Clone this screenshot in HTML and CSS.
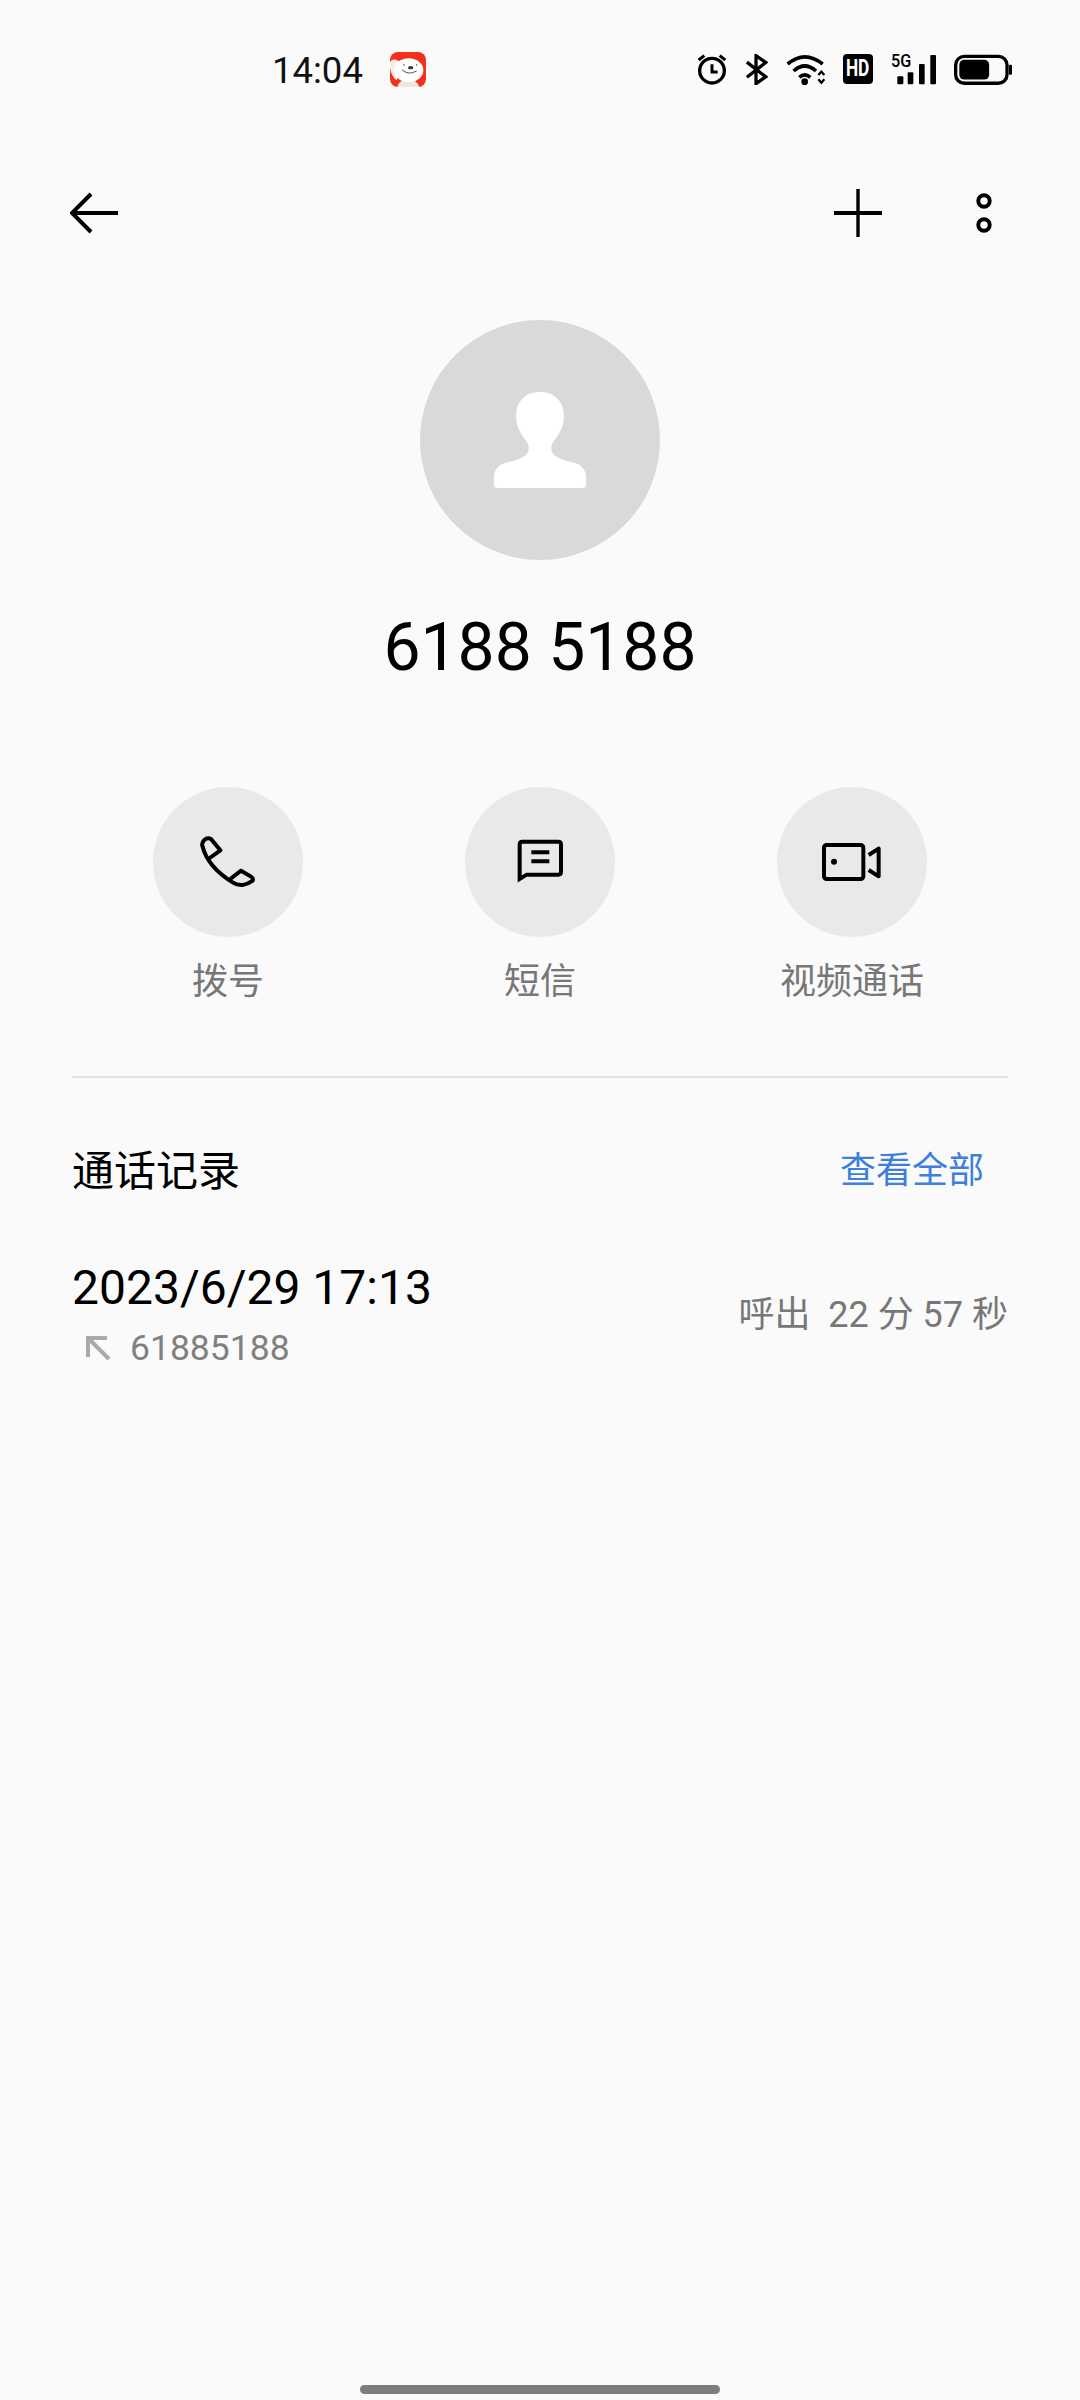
FILE: index.html
```html
<!DOCTYPE html>
<html>
<head>
  <title>6188 5188</title>
  <link rel="stylesheet" href="styles.css">
</head>
<body>
  <div class="page">
    <div class="status-bar">
      <span class="status-time">14:04</span>
      <svg class="status-app" viewBox="450 65 108 105">
        <rect x="450" y="65" width="108" height="105" rx="24" fill="#f2301c"/>
        <path d="M472 170Q476 148 505 148Q532 148 538 170Z" fill="#efe6e0"/>
        <path d="M449 100Q452 84 468 88Q480 92 484 98L470 150Q450 135 449 100Z" fill="#f6efe9"/>
        <ellipse cx="506" cy="120" rx="44" ry="36" fill="#fff"/>
        <ellipse cx="512" cy="112" rx="8" ry="5" fill="#333"/>
        <path d="M486 118Q505 136 530 122" fill="none" stroke="#555" stroke-width="3"/>
        <circle cx="492" cy="104" r="2.5" fill="#555"/>
        <circle cx="530" cy="104" r="2.5" fill="#555"/>
      </svg>
      <div class="status-icons">
        <svg class="ic-alarm" viewBox="56 55 87 93">
          <circle cx="98" cy="105" r="37" fill="none" stroke="#000" stroke-width="10"/>
          <path d="M98 86V109H115" fill="none" stroke="#000" stroke-width="9"/>
          <path d="M58 73L75 60M138 73L121 60" fill="none" stroke="#000" stroke-width="9"/>
        </svg>
        <svg class="ic-bt" viewBox="195 55 69 95">
          <path d="M200 80L258 125L228 146V60L258 81L200 126" fill="none" stroke="#000" stroke-width="10"/>
        </svg>
        <svg class="ic-wifi" viewBox="322 55 123 93">
          <path d="M327 85Q378 42 432 85M345 106Q378 76 412 106M362 125Q378 110 395 125" fill="none" stroke="#000" stroke-width="11"/>
          <circle cx="378" cy="138" r="10" fill="#000"/>
          <path d="M419 118L428 108L437 118M419 131L428 141L437 131" fill="none" stroke="#000" stroke-width="7"/>
        </svg>
        <span class="ic-hd"><span class="ic-hd-text">HD</span></span>
        <div class="ic-signal">
          <span class="ic-5g">5G</span>
          <svg class="ic-bars" viewBox="632 55 135 93">
            <rect x="651" y="122" width="18" height="24" rx="3"/>
            <rect x="682" y="110" width="17" height="36" rx="3"/>
            <rect x="716" y="85" width="17" height="61" rx="3"/>
            <rect x="750" y="58" width="17" height="88" rx="3"/>
          </svg>
        </div>
        <svg class="ic-battery" viewBox="819 55 175 93">
          <rect x="824" y="62" width="155" height="81" rx="26" fill="none" stroke="#000" stroke-width="10"/>
          <rect x="835" y="72" width="90" height="60" rx="15"/>
          <rect x="985" y="87" width="9" height="30" rx="3"/>
        </svg>
      </div>
    </div>

    <div class="nav-bar">
      <svg class="nav-icon" viewBox="0 0 48 48">
        <path d="M21 5L2 24L21 43" fill="none" stroke="#000" stroke-width="4"/>
        <path d="M2 24H48" fill="none" stroke="#000" stroke-width="4"/>
      </svg>
      <div class="nav-right">
        <svg class="nav-icon" viewBox="0 0 48 48">
          <path d="M0 24H48" stroke="#000" stroke-width="4"/>
          <path d="M24 0V48" stroke="#000" stroke-width="3.4"/>
        </svg>
        <svg class="nav-dots" viewBox="0 0 16 40">
          <circle cx="8" cy="8" r="5.7" fill="none" stroke="#000" stroke-width="4"/>
          <circle cx="8" cy="32" r="5.7" fill="none" stroke="#000" stroke-width="4"/>
        </svg>
      </div>
    </div>

    <div class="avatar">
      <svg class="avatar-person" viewBox="282 245 276 288">
        <path d="M420 245C375 245 348 275 348 318C348 350 365 375 380 395C392 412 388 430 365 442C345 452 320 455 305 462C290 470 282 485 282 500V522Q282 533 292 533H548Q558 533 558 522V500C558 485 550 470 535 462C520 455 495 452 475 442C452 430 448 412 460 395C475 375 492 350 492 318C492 275 465 245 420 245Z" fill="#fff"/>
      </svg>
    </div>
    <div class="contact-number">6188 5188</div>

    <div class="actions">
      <div class="action">
        <div class="action-circle">
          <svg class="action-icon" viewBox="0 0 225 225">
            <path d="M40 45Q50 36 60 42L88 76L52 102M40 45Q30 55 35 65Q50 125 125 172Q140 182 155 180Q170 178 185 167Q188 160 180 155L150 137L118 162" fill="none" stroke="#000" stroke-width="12" stroke-linejoin="round"/>
          </svg>
        </div>
        <div class="action-label">拨号</div>
      </div>
      <div class="action">
        <div class="action-circle">
          <svg class="action-icon" viewBox="-7 0 225 225">
            <path d="M43 162V58Q43 50 51 50H159Q167 50 167 58V141Q167 149 159 149H64Z" fill="none" stroke="#000" stroke-width="12"/>
            <path d="M78 82H132M78 109H132" fill="none" stroke="#000" stroke-width="12"/>
          </svg>
        </div>
        <div class="action-label">短信</div>
      </div>
      <div class="action">
        <div class="action-circle">
          <svg class="action-icon" viewBox="0 0 225 225">
            <rect x="27" y="60" width="118" height="102" rx="8" fill="none" stroke="#000" stroke-width="12"/>
            <circle cx="57" cy="110" r="9"/>
            <path d="M161 90L191 71V154L161 135" fill="none" stroke="#000" stroke-width="12" stroke-linejoin="round"/>
          </svg>
        </div>
        <div class="action-label">视频通话</div>
      </div>
    </div>

    <div class="divider"></div>

    <div class="history-head">
      <span class="history-title">通话记录</span>
      <span class="history-all">查看全部</span>
    </div>

    <div class="call-row">
      <div>
        <div class="call-date">2023/6/29 17:13</div>
        <div class="call-number">
          <svg class="call-arrow" viewBox="0 0 26 26">
            <path d="M3 22V3H22" fill="none" stroke="#aaa" stroke-width="4"/>
            <path d="M3 3L24 24" fill="none" stroke="#aaa" stroke-width="4"/>
          </svg>
          <span>61885188</span>
        </div>
      </div>
      <div class="call-info">呼出  22 分 57 秒</div>
    </div>

    <div class="home-bar"></div>
  </div>
</body>
</html>
```

FILE: styles.css
```css
body {
  margin: 0;
  padding: 0;
  background-color: #fafafa;
  font-family: Roboto, "Noto Sans CJK SC", sans-serif;
  color: #000;
}

.page {
  display: flex;
  flex-direction: column;
  height: 2400px;
  box-sizing: border-box;
}

.status-bar {
  display: flex;
  align-items: center;
  height: 138px;
  padding: 0 68px 0 272px;
}

.status-time {
  width: 118px;
  padding-top: 2px;
  font-size: 36.5px;
  color: #111;
}

.status-app {
  width: 36px;
  height: 35px;
}

.status-icons {
  display: flex;
  align-items: center;
  gap: 18px;
  margin-left: auto;
}

.ic-alarm {
  width: 29px;
  height: 31px;
}

.ic-bt {
  width: 23px;
  height: 31px;
}

.ic-wifi {
  width: 41px;
  height: 31px;
}

.ic-hd {
  display: flex;
  align-items: center;
  justify-content: center;
  width: 30px;
  height: 30px;
  margin-left: -2px;
  background-color: #000;
  border-radius: 4px;
  color: #fff;
  font-size: 23px;
  line-height: 30px;
  font-weight: 700;
}

.ic-hd-text {
  transform: scaleX(0.75);
}

.ic-signal {
  position: relative;
  width: 45px;
  height: 31px;
}

.ic-5g {
  position: absolute;
  left: 0;
  top: -2px;
  font-size: 18px;
  line-height: 18px;
  font-weight: 500;
  transform: scaleX(0.9);
  transform-origin: left top;
}

.ic-bars {
  display: block;
  width: 45px;
  height: 31px;
}

.ic-battery {
  width: 58px;
  height: 31px;
}

.nav-bar {
  display: flex;
  align-items: center;
  justify-content: space-between;
  height: 150px;
  padding: 0 88px 0 70px;
}

.nav-right {
  display: flex;
  align-items: center;
  gap: 94px;
}

.nav-icon {
  display: block;
  width: 48px;
  height: 48px;
}

.nav-dots {
  display: block;
  width: 16px;
  height: 40px;
}

.avatar {
  display: flex;
  align-items: center;
  justify-content: center;
  align-self: center;
  width: 240px;
  height: 240px;
  margin-top: 32px;
  background-color: #d9d9d9;
  border-radius: 50%;
}

.avatar-person {
  width: 92px;
  height: 96px;
}

.contact-number {
  margin-top: 48px;
  font-size: 66px;
  line-height: 80px;
  text-align: center;
}

.actions {
  display: grid;
  grid-template-columns: repeat(3, 1fr);
  margin-top: 99px;
  padding: 0 72px;
}

.action {
  display: flex;
  flex-direction: column;
  align-items: center;
}

.action-circle {
  display: flex;
  align-items: center;
  justify-content: center;
  width: 150px;
  height: 150px;
  background-color: #e9e9e9;
  border-radius: 50%;
}

.action-icon {
  width: 75px;
  height: 75px;
}

.action-label {
  margin-top: 21px;
  font-size: 36px;
  line-height: 48px;
  color: #777;
}

.divider {
  height: 2px;
  margin: 70px 72px 0;
  background-color: #e2e2e2;
}

.history-head {
  display: flex;
  align-items: center;
  justify-content: space-between;
  height: 60px;
  margin-top: 59px;
  padding: 0 96px 0 72px;
}

.history-title {
  font-size: 42px;
}

.history-all {
  font-size: 36px;
  color: #3e7fdd;
}

.call-row {
  display: flex;
  align-items: center;
  justify-content: space-between;
  margin-top: 61px;
  padding: 0 72px;
}

.call-date {
  font-size: 48px;
  line-height: 60px;
}

.call-number {
  display: flex;
  align-items: center;
  gap: 19px;
  margin-top: 6px;
  padding-left: 13px;
  font-size: 35.5px;
  line-height: 48px;
  color: #808080;
}

.call-arrow {
  width: 26px;
  height: 26px;
}

.call-info {
  padding-bottom: 8px;
  font-size: 36px;
  color: #777;
  white-space: pre;
}

.home-bar {
  align-self: center;
  width: 360px;
  height: 9px;
  margin-top: auto;
  margin-bottom: 6px;
  background-color: #7d7d7d;
  border-radius: 5px;
}
```
